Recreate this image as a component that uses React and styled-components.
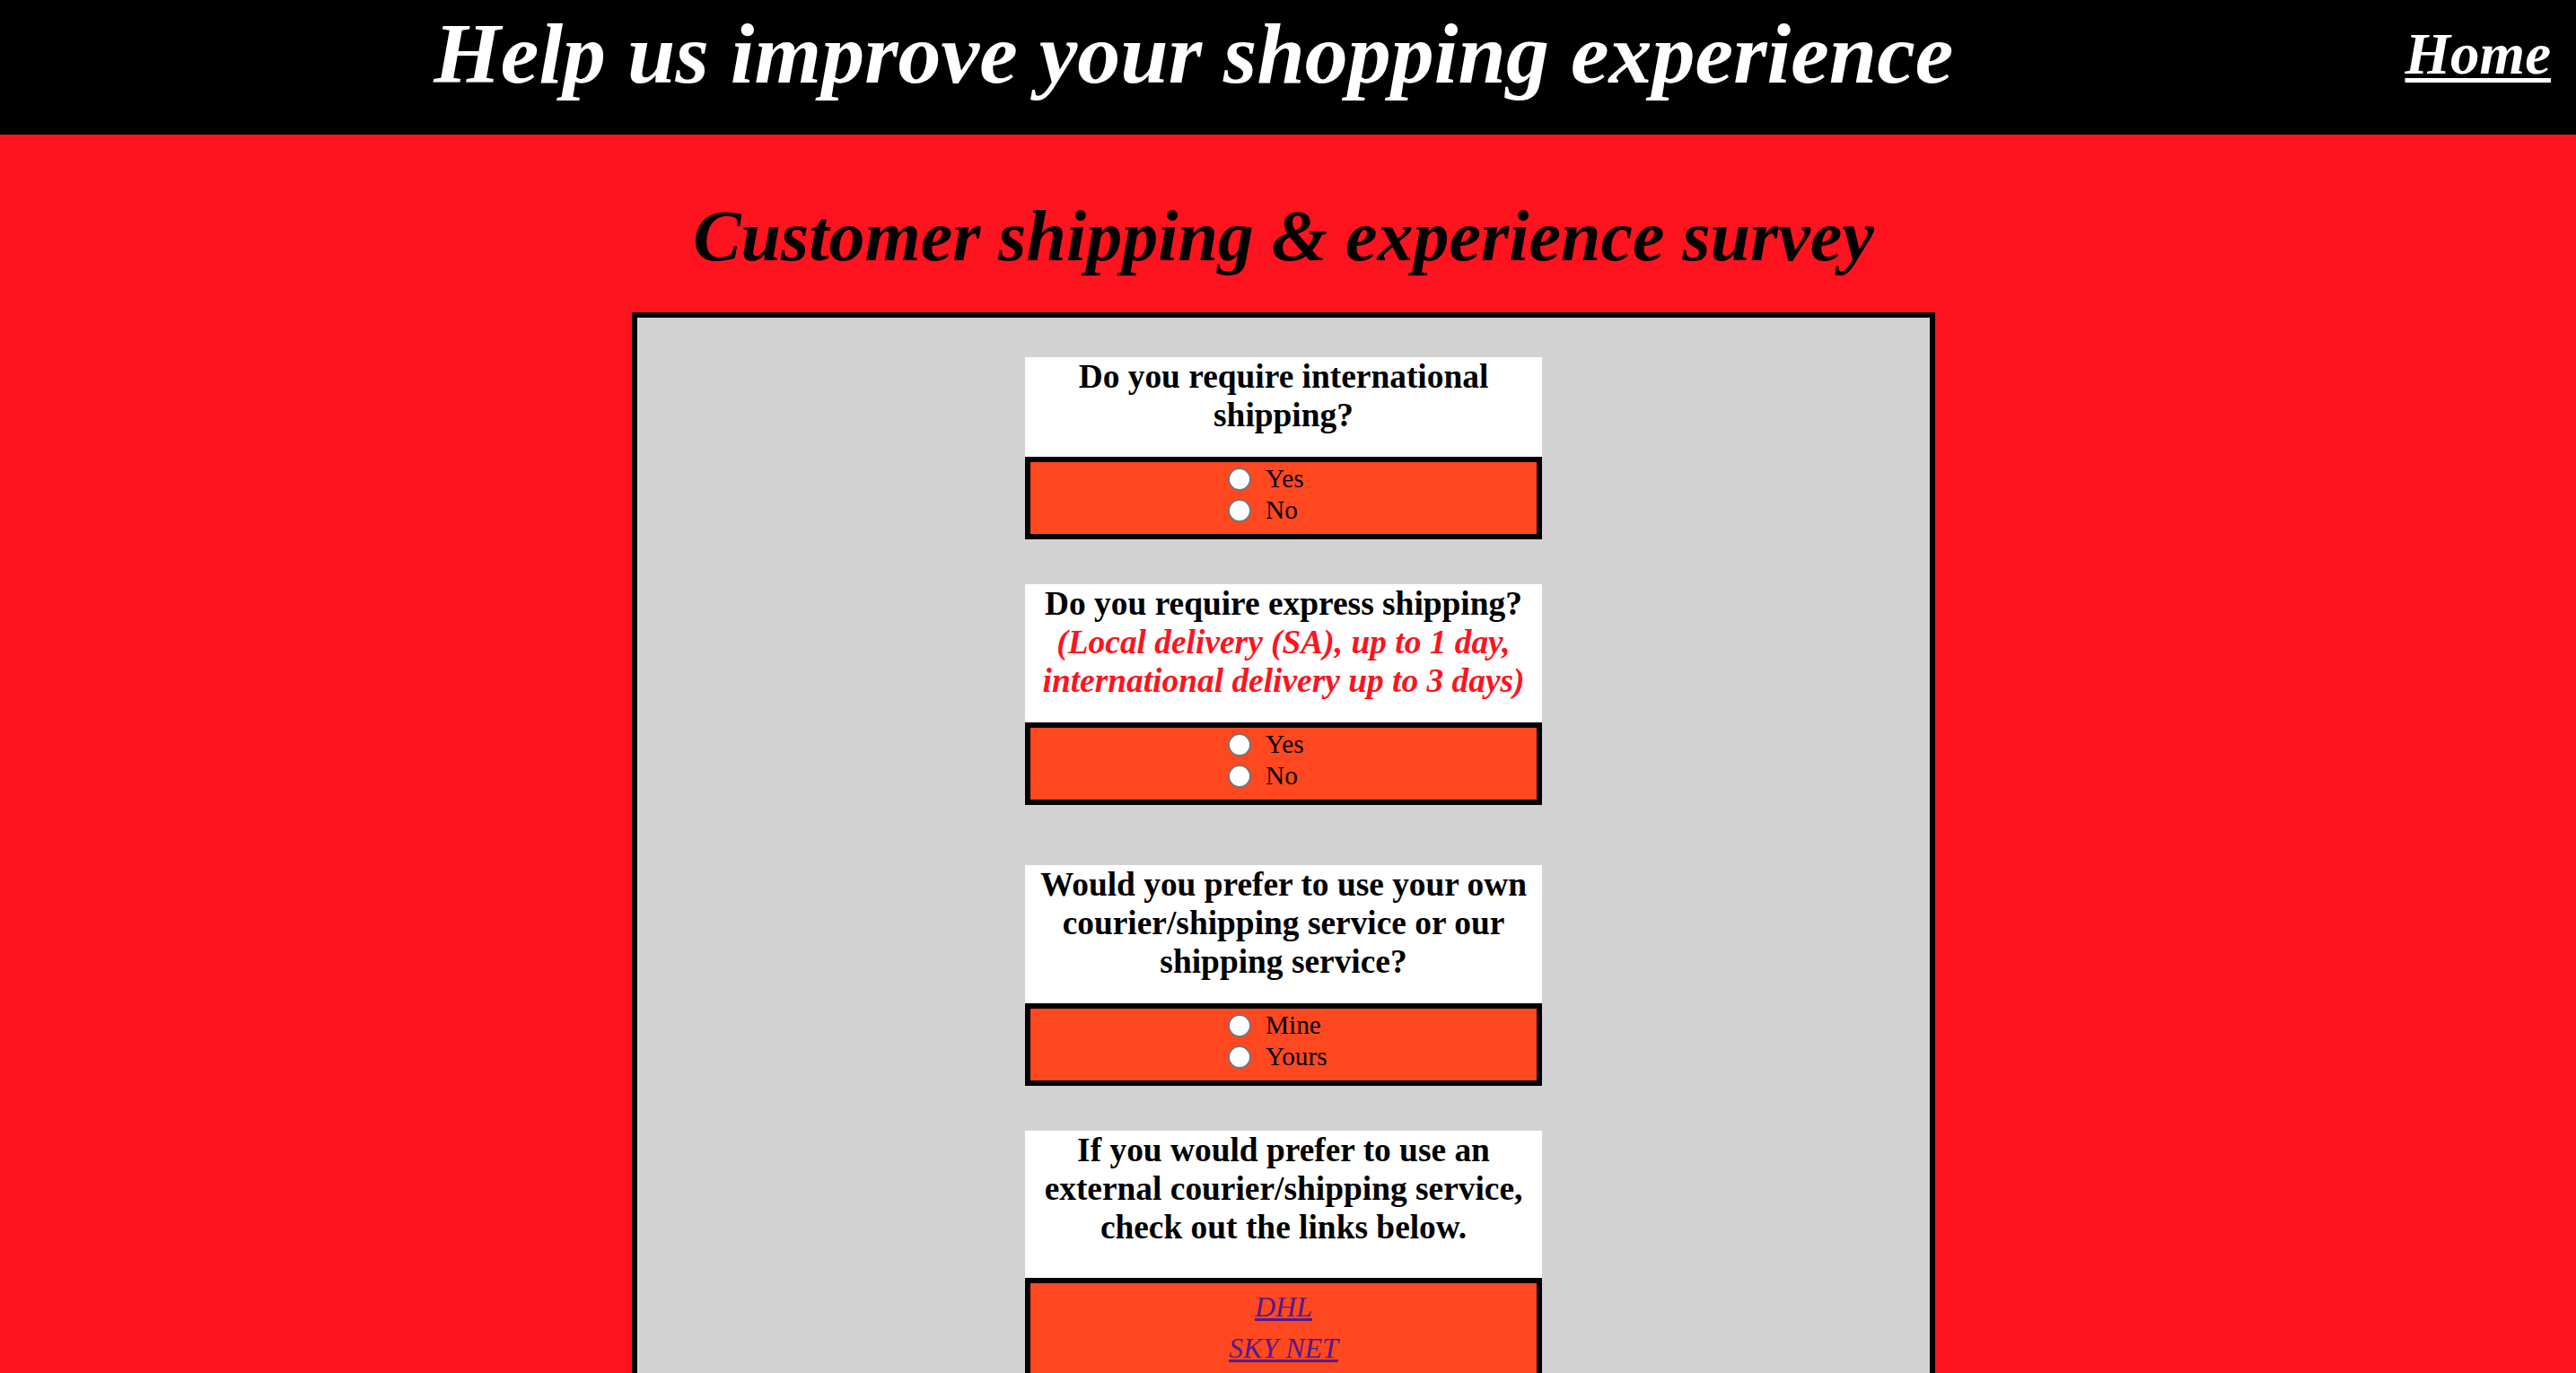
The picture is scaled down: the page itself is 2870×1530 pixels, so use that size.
import React from 'react'
import styled, { createGlobalStyle } from 'styled-components'

const GlobalStyle = createGlobalStyle`
  body {
    margin: 0;
    background: #ff131e;
    font-family: "Liberation Serif", "Times New Roman", serif;
  }
`

const Header = styled.header`
  display: flex;
  align-items: flex-start;
  height: 150px;
  background: #000;
`

const HeaderTitle = styled.h1`
  flex: 1;
  margin: 0;
  padding-top: 5px;
  text-align: center;
  color: #fff;
  font-size: 96px;
  font-weight: bold;
  font-style: italic;
  line-height: 1.15;
`

const HomeLink = styled.a`
  padding: 23px 28px 0 20px;
  color: #fff;
  font-size: 65px;
  font-weight: bold;
  font-style: italic;
  line-height: 1.15;
  text-decoration: underline;
  text-decoration-thickness: 5px;
  text-underline-offset: 5px;
`

const Main = styled.main`
  padding-right: 10px;
`

const SurveyTitle = styled.h2`
  margin: 67px 0 39px;
  text-align: center;
  color: #000;
  font-size: 80px;
  font-weight: bold;
  font-style: italic;
  line-height: 1.15;
`

const SurveyBox = styled.section`
  width: 1440px;
  margin: 0 auto;
  padding: 44px 0 44px;
  background: #d3d3d3;
  border: 6px solid #000;
`

const Card = styled.div`
  width: 576px;
  margin: ${p => p.$top || 0}px auto 0;
`

const Question = styled.div`
  padding-bottom: ${p => p.$pad || 25}px;
  background: #fff;
  text-align: center;
  color: #000;
  font-size: 37.4px;
  font-weight: bold;
  line-height: 1.15;
`

const Note = styled.span`
  color: #ff131e;
  font-style: italic;
`

const AnswerBox = styled.div`
  background: #ff4820;
  border: 6px solid #000;
`

const RadioGroup = styled.div`
  display: flex;
  flex-direction: column;
  padding: 1px 0 9px 220px;
`

const RadioRow = styled.label`
  display: flex;
  align-items: center;
  height: 35px;
  color: #000;
  font-size: 29.3px;
`

const Radio = styled.input.attrs({ type: 'radio' })`
  appearance: none;
  box-sizing: border-box;
  width: 26px;
  height: 26px;
  margin: 0 16px 0 0;
  background: #fff;
  border: 2px solid #767676;
  border-radius: 50%;
`

const LinkList = styled.div`
  display: flex;
  flex-direction: column;
  align-items: center;
  gap: 9px;
  padding: 8px 0 11px;
`

const CourierLink = styled.a`
  color: #551a8b;
  font-size: 32px;
  font-style: italic;
  line-height: 1.15;
`

const RadioQuestion = ({ top, name, options, children }) => (
  <Card $top={top}>
    <Question>{children}</Question>
    <AnswerBox>
      <RadioGroup>
        {options.map(o => (
          <RadioRow key={o}>
            <Radio name={name} value={o} />
            {o}
          </RadioRow>
        ))}
      </RadioGroup>
    </AnswerBox>
  </Card>
)

export default function App() {
  return (
    <>
      <GlobalStyle />
      <Header>
        <HeaderTitle>Help us improve your shopping experience</HeaderTitle>
        <HomeLink href="#">Home</HomeLink>
      </Header>
      <Main>
        <SurveyTitle>Customer shipping &amp; experience survey</SurveyTitle>
        <SurveyBox>
          <RadioQuestion name="international" options={['Yes', 'No']}>
            Do you require international shipping?
          </RadioQuestion>
          <RadioQuestion top={50} name="express" options={['Yes', 'No']}>
            Do you require express shipping?
            <br />
            <Note>(Local delivery (SA), up to 1 day, international delivery up to 3 days)</Note>
          </RadioQuestion>
          <RadioQuestion top={67} name="courier" options={['Mine', 'Yours']}>
            Would you prefer to use your own courier/shipping service or our shipping service?
          </RadioQuestion>
          <Card $top={50}>
            <Question $pad={35}>
              If you would prefer to use an external courier/shipping service, check out the links below.
            </Question>
            <AnswerBox>
              <LinkList>
                <CourierLink href="#">DHL</CourierLink>
                <CourierLink href="#">SKY NET</CourierLink>
              </LinkList>
            </AnswerBox>
          </Card>
        </SurveyBox>
      </Main>
    </>
  )
}
